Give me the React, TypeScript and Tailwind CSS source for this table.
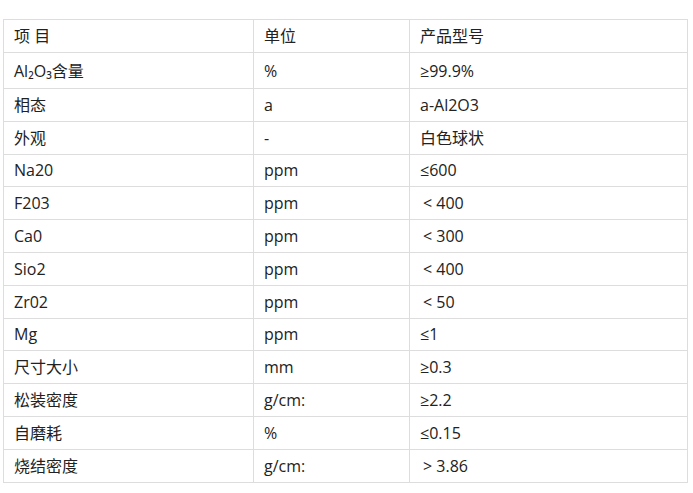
const rows: [string, string, string][] = [
  ["Al₂O₃含量", "%", "≥99.9%"],
  ["相态", "a", "a-Al2O3"],
  ["外观", "-", "白色球状"],
  ["Na20", "ppm", "≤600"],
  ["F203", "ppm", "< 400"],
  ["Ca0", "ppm", "< 300"],
  ["Sio2", "ppm", "< 400"],
  ["Zr02", "ppm", "< 50"],
  ["Mg", "ppm", "≤1"],
  ["尺寸大小", "mm", "≥0.3"],
  ["松装密度", "g/cm:", "≥2.2"],
  ["自磨耗", "%", "≤0.15"],
  ["烧结密度", "g/cm:", "> 3.86"],
];

const cell = "border border-[#dddddd] pl-[10px] pr-2 py-0 text-left align-middle font-normal";

export default function App() {
  return (
    <div className="h-[493px] w-[693px] bg-white pt-[19px] pl-[3px] font-['Open_Sans','Noto_Sans_CJK_SC',sans-serif] text-[16px] leading-none text-[#222222]">
      <table className="w-[684px] table-fixed border-collapse">
        <colgroup>
          <col className="w-[250px]" />
          <col className="w-[156px]" />
          <col className="w-[278px]" />
        </colgroup>
        <thead>
          <tr className="h-[33px]">
            <th className={cell}>项 目</th>
            <th className={cell}>单位</th>
            <th className={cell}>产品型号</th>
          </tr>
        </thead>
        <tbody>
          {rows.map(([a, b, c], i) => (
            <tr key={i} className={i === 0 ? "h-[36px]" : "h-[32.8px]"}>
              <td className={cell}>{a}</td>
              <td className={cell}>{b}</td>
              <td className={cell}>
                {c.startsWith("<") || c.startsWith(">") ? <span className="ml-[3px]">{c}</span> : c}
              </td>
            </tr>
          ))}
        </tbody>
      </table>
    </div>
  );
}
